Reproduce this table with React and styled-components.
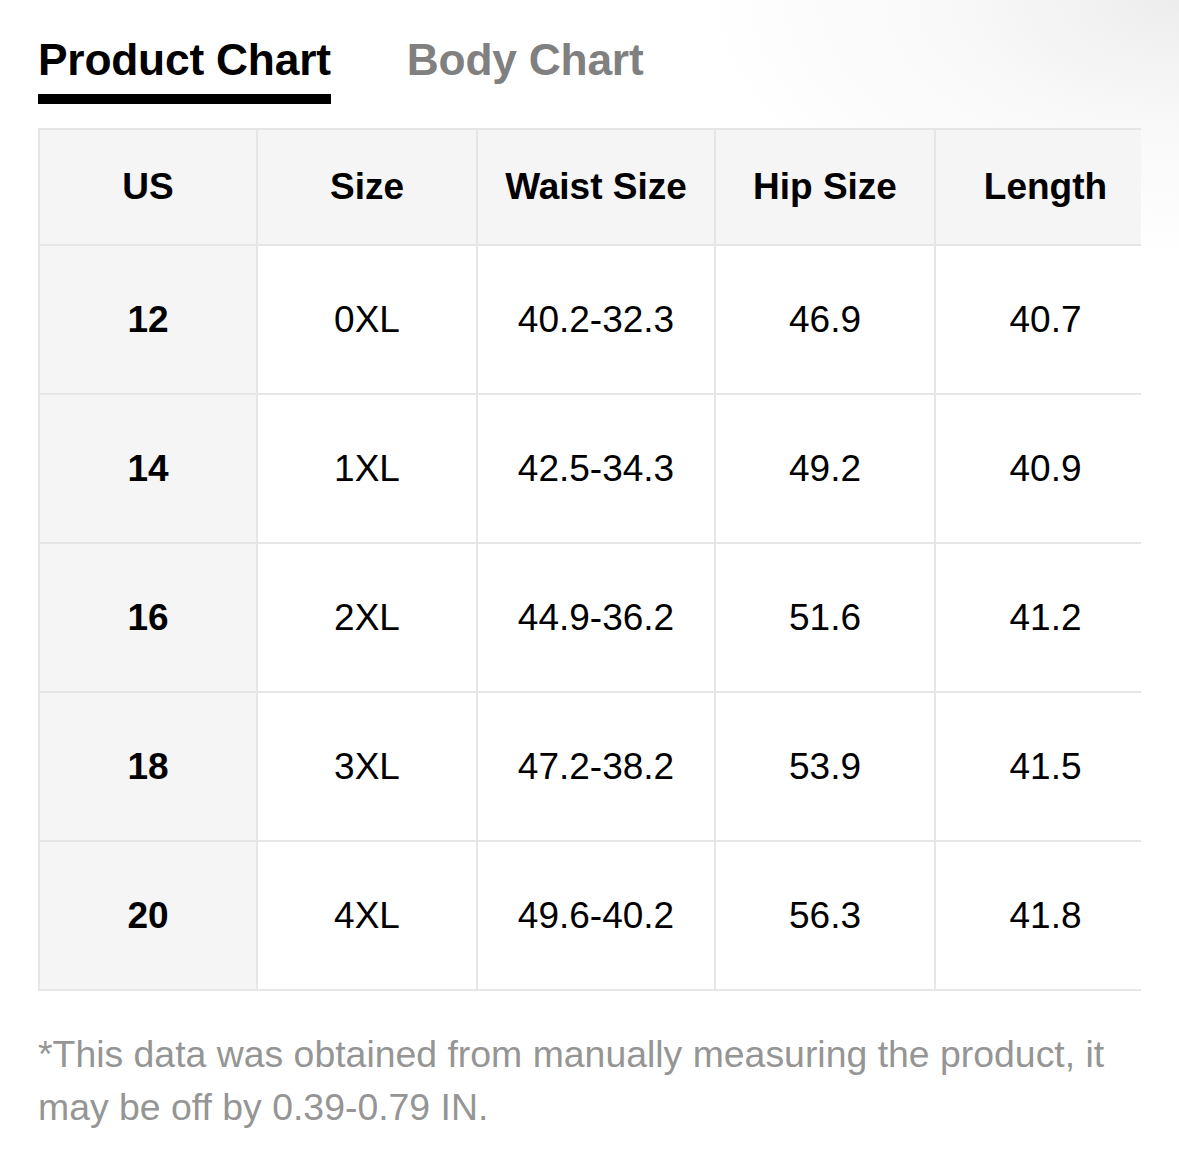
import React from 'react';
import styled, { createGlobalStyle } from 'styled-components';

const GlobalStyle = createGlobalStyle`
  html, body {
    margin: 0;
    padding: 0;
    background: #fff;
  }
  body {
    font-family: 'Liberation Sans', Arial, Helvetica, sans-serif;
    color: #000;
  }
`;

const Page = styled.div`
  width: 1179px;
  min-height: 1168px;
  box-sizing: border-box;
  padding: 35px 38px 0 38px;
  background: radial-gradient(ellipse 480px 260px at 1179px 0px, #ededed 0%, #f8f8f8 45%, rgba(255, 255, 255, 0) 100%), #fff;
`;

const Tabs = styled.div`
  display: flex;
  gap: 76px;
  margin-bottom: 24px;
`;

const Tab = styled.div`
  font-size: 44.3px;
  font-weight: 700;
  line-height: 50px;
  color: ${p => (p.active ? '#000' : '#808080')};
  padding-bottom: 9px;
  border-bottom: 10px solid ${p => (p.active ? '#000' : 'transparent')};
  letter-spacing: -0.2px;
`;

const TableClip = styled.div`
  width: 1103px;
  overflow: hidden;
`;

const Table = styled.table`
  width: 1117px;
  border-collapse: collapse;
  table-layout: fixed;
`;

const Cell = styled.td`
  border: 2px solid #e6e6e6;
  text-align: center;
  vertical-align: middle;
  padding: 0;
  height: ${p => (p.head ? '114px' : '147px')};
  font-size: 37px;
  font-weight: ${p => (p.head || p.first ? 700 : 400)};
  background: ${p => (p.head || p.first ? '#f5f5f5' : '#fff')};
`;

const Note = styled.p`
  margin: 37px 0 0;
  font-size: 37.4px;
  line-height: 53px;
  color: #959595;
  width: 1103px;
`;

const columns = ['US', 'Size', 'Waist Size', 'Hip Size', 'Length'];
const widths = [218, 220, 238, 220, 221];

const rows = [
  ['12', '0XL', '40.2-32.3', '46.9', '40.7'],
  ['14', '1XL', '42.5-34.3', '49.2', '40.9'],
  ['16', '2XL', '44.9-36.2', '51.6', '41.2'],
  ['18', '3XL', '47.2-38.2', '53.9', '41.5'],
  ['20', '4XL', '49.6-40.2', '56.3', '41.8'],
];

const App = () => {
  return (
    <>
      <GlobalStyle />
      <Page>
        <Tabs>
          <Tab active>Product Chart</Tab>
          <Tab>Body Chart</Tab>
        </Tabs>
        <TableClip>
          <Table>
            <colgroup>
              {widths.map((w, i) => (
                <col key={i} style={{ width: w }} />
              ))}
            </colgroup>
            <thead>
              <tr>
                {columns.map(c => (
                  <Cell as="th" head key={c}>
                    {c}
                  </Cell>
                ))}
              </tr>
            </thead>
            <tbody>
              {rows.map(row => (
                <tr key={row[0]}>
                  {row.map((v, i) => (
                    <Cell key={i} first={i === 0}>
                      {v}
                    </Cell>
                  ))}
                </tr>
              ))}
            </tbody>
          </Table>
        </TableClip>
        <Note>
          *This data was obtained from manually measuring the product, it may be off by 0.39-0.79 IN.
        </Note>
      </Page>
    </>
  );
};

export default App;
